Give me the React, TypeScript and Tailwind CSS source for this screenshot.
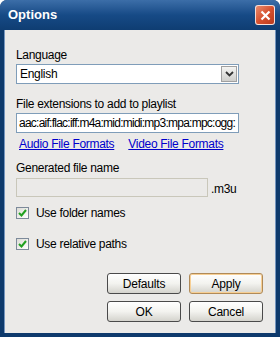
import React from "react";

const font = { fontFamily: "'Liberation Sans', Arial, sans-serif" };

function XpButton({ label, focus }: { label: string; focus?: boolean }) {
  return (
    <div
      className={`flex h-[21px] w-[74px] items-center justify-center rounded-[3px] border text-[12px] tracking-[-0.2px] text-black ${
        focus ? "border-[#b08a58] shadow-[inset_0_0_0_1px_#f7cf94]" : "border-[#4a4a4a]"
      } bg-gradient-to-b from-[#ffffff] via-[#f3f3ef] to-[#d4d3cd]`}
    >
      {label}
    </div>
  );
}

function Check({ label }: { label: string }) {
  return (
    <div className="flex h-[14px] items-center gap-[7px]">
      <div className="flex h-[12px] w-[13px] items-center justify-center border border-[#7d8a9a] bg-gradient-to-br from-[#dcdcd6] to-white">
        <svg width="9" height="8" viewBox="0 0 9 8">
          <path d="M1 4 L3.5 6.5 L8 1" stroke="#21a121" strokeWidth="2" fill="none" />
        </svg>
      </div>
      <span className="text-[12px] leading-[14px] tracking-[-0.3px] text-black">{label}</span>
    </div>
  );
}

export default function App() {
  return (
    <div className="h-[337px] w-[280px] overflow-hidden rounded-t-[7px] bg-[#0e3a6c]" style={font}>
      {/* title bar */}
      <div className="flex h-[30px] items-center justify-between bg-gradient-to-b from-[#3c6ea8] via-[#164a86] to-[#0f3d72] pl-[8px] pr-[5px]">
        <span className="text-[13px] font-bold text-white">Options</span>
        <div className="flex h-[20px] w-[20px] items-center justify-center rounded-[3px] border border-white/80 bg-gradient-to-br from-[#e98a6c] via-[#d6512f] to-[#b83a1e]">
          <svg width="11" height="11" viewBox="0 0 11 11">
            <path d="M1.5 1.5 L9.5 9.5 M9.5 1.5 L1.5 9.5" stroke="white" strokeWidth="2.2" />
          </svg>
        </div>
      </div>

      {/* client */}
      <div className="mx-[4px] h-[303px] border-l border-r border-[#7596bf] bg-[#ebeae8] pl-[11px] pr-[12px] pt-[18px] text-[12px] tracking-[-0.3px] text-black">
        <div className="h-[14px] leading-[14px]">Language</div>
        <div className="mt-[2px] flex h-[20px] w-[223px] items-center border border-[#7f9db9] bg-white pl-[3px]">
          <span className="flex-1">English</span>
          <div className="mr-[1px] flex h-[16px] w-[16px] items-center justify-center border border-[#a0a0a0] bg-gradient-to-b from-[#f4f4f2] to-[#cfcfcc]">
            <svg width="9" height="6" viewBox="0 0 9 6">
              <path d="M1 1 L4.5 4.5 L8 1" stroke="#333" strokeWidth="1.8" fill="none" />
            </svg>
          </div>
        </div>

        <div className="mt-[13px] h-[14px] leading-[14px]">File extensions to add to playlist</div>
        <div className="mt-[2px] flex h-[20px] w-[223px] items-center overflow-hidden whitespace-nowrap border border-[#7f9db9] bg-white pl-[2px] tracking-[-0.75px]">
          aac:aif:flac:iff:m4a:mid:midi:mp3:mpa:mpc:ogg:
        </div>
        <div className="mt-[4px] flex h-[14px] gap-[14px] pl-[3px] leading-[14px] text-[#0000cc] underline">
          <span>Audio File Formats</span>
          <span>Video File Formats</span>
        </div>

        <div className="mt-[10px] h-[14px] leading-[14px]">Generated file name</div>
        <div className="mt-[3px] flex items-end gap-[3px]">
          <div className="h-[19px] w-[192px] border border-[#c9c7ba] bg-[#ebeae8]" />
          <span className="pb-[1px] leading-[14px]">.m3u</span>
        </div>

        <div className="mt-[9px]">
          <Check label="Use folder names" />
        </div>
        <div className="mt-[17px]">
          <Check label="Use relative paths" />
        </div>

        <div className="mt-[22px] flex flex-col items-end gap-[7px]">
          <div className="flex gap-[8px]">
            <XpButton label="Defaults" />
            <XpButton label="Apply" focus />
          </div>
          <div className="flex gap-[8px]">
            <XpButton label="OK" />
            <XpButton label="Cancel" />
          </div>
        </div>
      </div>
    </div>
  );
}
